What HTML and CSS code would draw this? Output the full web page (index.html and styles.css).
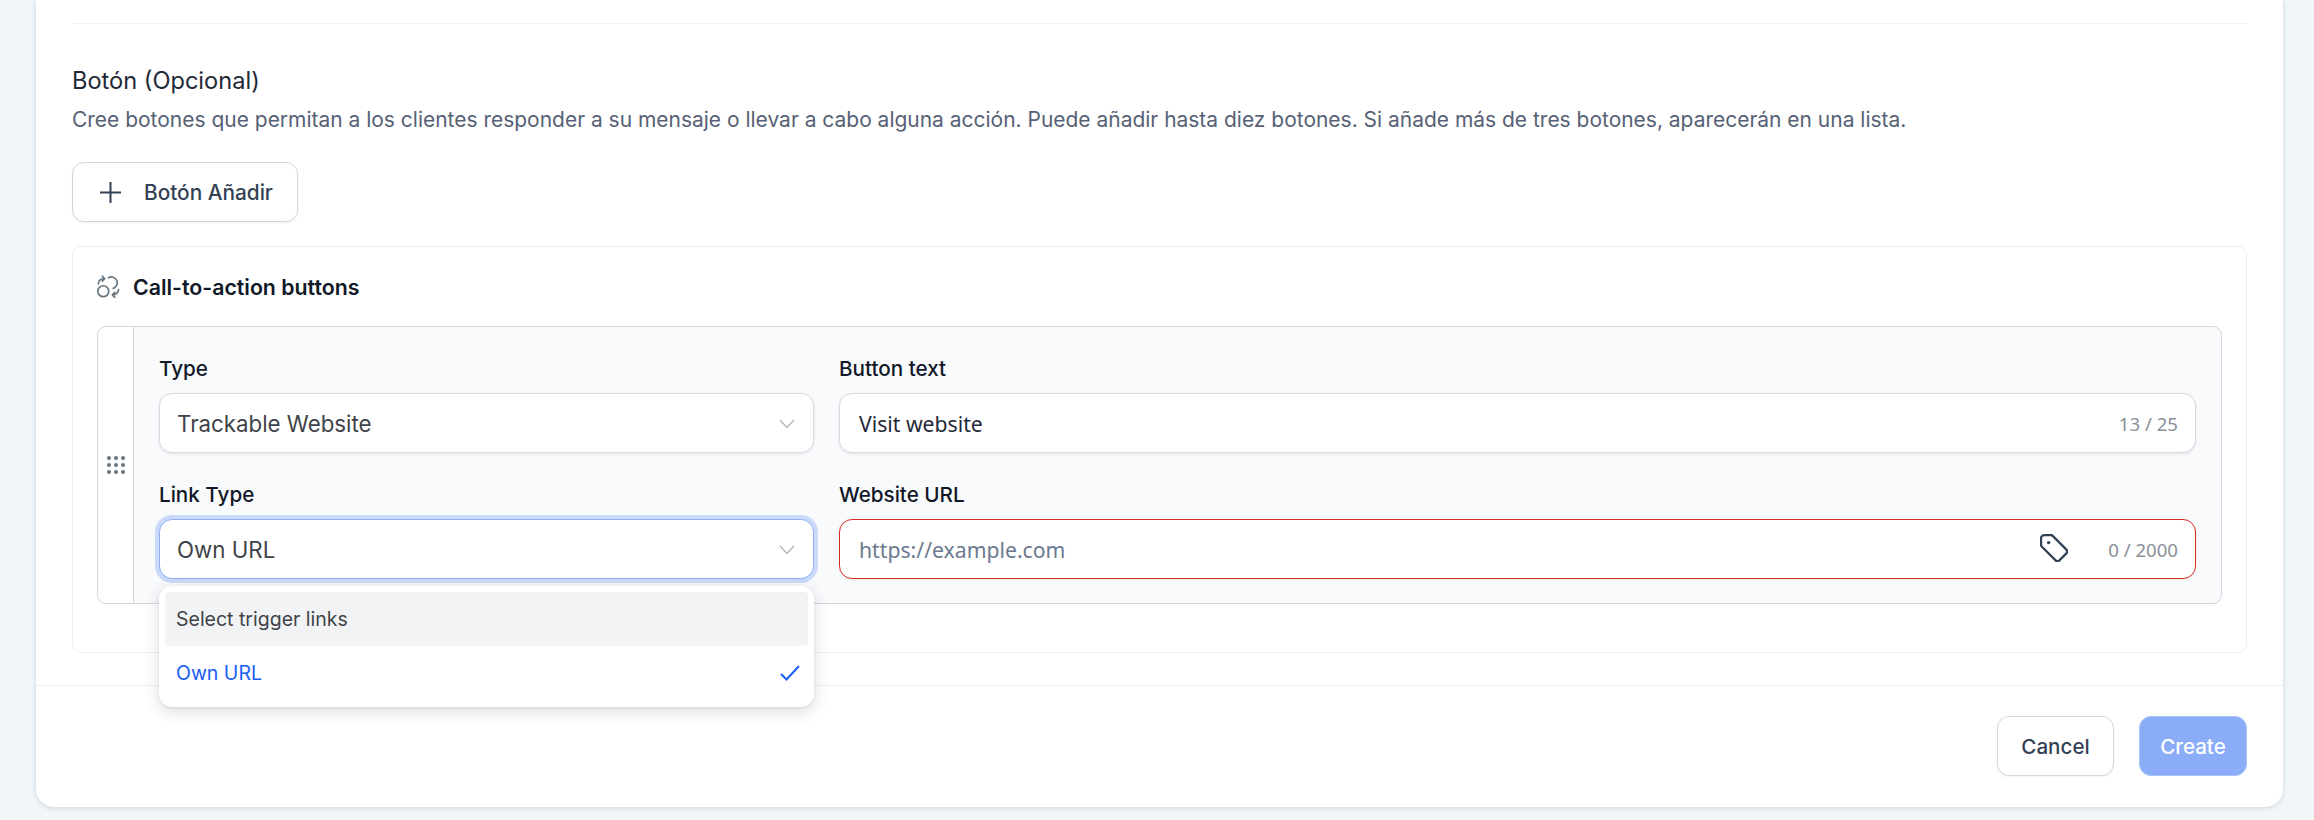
FILE: index.html
```html
<!DOCTYPE html>
<html lang="es">
<head>
<meta charset="utf-8">
<title>Botón</title>
<link rel="stylesheet" href="styles.css">
</head>
<body>
<main class="card">
  <div class="body">
    <hr class="top-rule">
    <h2 class="heading">Botón (Opcional)</h2>
    <p class="desc">Cree botones que permitan a los clientes responder a su mensaje o llevar a cabo alguna acción. Puede añadir hasta diez botones. Si añade más de tres botones, aparecerán en una lista.</p>
    <button class="btn add-btn" type="button">
      <svg class="plus" viewBox="0 0 21 21" width="21" height="21"><path d="M10.5 0v21M0 10.5h21" fill="none" stroke="#334155" stroke-width="2"/></svg>
      <span>Botón Añadir</span>
    </button>
    <section class="panel">
      <div class="panel-title">
        <svg class="cycle" viewBox="0 0 22 22" width="23" height="23" fill="none" stroke="#66757f" stroke-width="1.6" stroke-linecap="round" stroke-linejoin="round">
          <circle cx="6" cy="15.5" r="5.2"/>
          <path d="M11 2.6A5.6 5.6 0 1 1 15.5 12.8"/>
          <path d="M1.2 8.5A5.2 5.2 0 0 1 7 3.4M5 1l2.3 2.4L5 5.8"/>
          <path d="M20.6 14A5.2 5.2 0 0 1 15 19M17 16.6 14.7 19l2.3 2.4"/>
        </svg>
        <span>Call-to-action buttons</span>
      </div>
      <div class="row-box">
        <div class="grip">
          <svg viewBox="0 0 18 18" width="18" height="18" fill="#66757f">
            <circle cx="2" cy="2" r="2"/><circle cx="9" cy="2" r="2"/><circle cx="16" cy="2" r="2"/>
            <circle cx="2" cy="9" r="2"/><circle cx="9" cy="9" r="2"/><circle cx="16" cy="9" r="2"/>
            <circle cx="2" cy="16" r="2"/><circle cx="9" cy="16" r="2"/><circle cx="16" cy="16" r="2"/>
          </svg>
        </div>
        <div class="fields">
          <div class="field">
            <label class="label">Type</label>
            <div class="control">
              <span class="value">Trackable Website</span>
              <svg class="chev" viewBox="0 0 16 10" width="16" height="10"><path d="M1 1l7 7.5L15 1" fill="none" stroke="#b4b8be" stroke-width="1.4"/></svg>
            </div>
          </div>
          <div class="field">
            <label class="label">Button text</label>
            <div class="control text-control">
              <span class="value">Visit website</span>
              <span class="count">13 / 25</span>
            </div>
          </div>
          <div class="field link-field">
            <label class="label">Link Type</label>
            <div class="control focused">
              <span class="value">Own URL</span>
              <svg class="chev" viewBox="0 0 16 10" width="16" height="10"><path d="M1 1l7 7.5L15 1" fill="none" stroke="#b4b8be" stroke-width="1.4"/></svg>
            </div>
            <ul class="menu">
              <li class="option hover">Select trigger links</li>
              <li class="option selected">
                <span>Own URL</span>
                <svg viewBox="0 0 20 16" width="20" height="16"><path d="M1 9l5.5 5.5L19 1" fill="none" stroke="#1a5cf5" stroke-width="2"/></svg>
              </li>
            </ul>
          </div>
          <div class="field">
            <label class="label">Website URL</label>
            <div class="control text-control error">
              <span class="value placeholder">https://example.com</span>
              <svg class="tag" viewBox="1 1 26 26" width="28" height="28" fill="none" stroke="#334155" stroke-width="2.1"><path d="M5 2h6a2.5 2.5 0 0 1 1.8.7L25.5 15.5a2.5 2.5 0 0 1 0 3.5L19 25.5a2.5 2.5 0 0 1-3.5 0L2.8 12.8A2.5 2.5 0 0 1 2 11V5a3 3 0 0 1 3-3z"/><circle cx="9" cy="9" r="1.6" fill="#334155" stroke="none"/></svg>
              <span class="count">0 / 2000</span>
            </div>
          </div>
        </div>
      </div>
    </section>
  </div>
  <footer class="footer">
    <button class="btn cancel" type="button">Cancel</button>
    <button class="btn create" type="button">Create</button>
  </footer>
</main>
</body>
</html>
```
FILE: styles.css
```css
* { box-sizing: border-box; }
html, body { margin: 0; padding: 0; }
body {
  width: 2314px;
  height: 820px;
  overflow: hidden;
  background: #f1f6f9;
  font-family: Inter, "Liberation Sans", sans-serif;
  padding-left: 36px;
}
.card {
  width: 2247px;
  height: 807px;
  background: #fff;
  border-radius: 0 0 18px 18px;
  box-shadow: 0 1px 5px rgba(40, 60, 90, .18);
  display: flex;
  flex-direction: column;
}
.body {
  height: 649px;
  padding: 23px 36px 0;
  flex: none;
}
.top-rule {
  margin: 0;
  border: 0;
  border-top: 1px solid #f1f2f4;
}
.heading {
  margin: 44px 0 0;
  font-size: 23.6px;
  line-height: 26px;
  font-weight: 400;
  color: #1f2937;
}
.desc {
  margin: 13px 0 0;
  font-size: 20.98px;
  line-height: 26px;
  font-weight: 400;
  color: #566175;
  white-space: nowrap;
}
.btn {
  font-family: inherit;
  font-size: 20.6px;
  font-weight: 500;
  height: 60px;
  border-radius: 12px;
  background: #fff;
  color: #334155;
  border: 1.5px solid #d3d6df;
  box-shadow: 0 1px 2px rgba(16, 24, 40, .06);
  padding: 0;
}
.add-btn {
  margin-top: 29px;
  width: 226px;
  display: flex;
  align-items: center;
  padding-left: 27px;
  gap: 23px;
  font-size: 20.8px;
}
.plus { flex: none; }
.panel {
  margin-top: 24px;
  height: 407px;
  border: 1px solid #eceef1;
  border-radius: 9px;
  padding: 0 24px;
}
.panel-title {
  height: 79px;
  display: flex;
  align-items: center;
  gap: 13px;
  font-size: 21.3px;
  font-weight: 600;
  color: #111827;
}
.cycle { flex: none; }
.row-box {
  display: flex;
  height: 278px;
  border: 1px solid #d3d6df;
  border-radius: 9px;
  background: #f9fafc;
}
.grip {
  flex: none;
  width: 36px;
  background: #fff;
  border-right: 1px solid #d3d6df;
  border-radius: 9px 0 0 9px;
  display: flex;
  align-items: center;
  justify-content: center;
}
.fields {
  flex: 1;
  display: grid;
  grid-template-columns: 655px 1fr;
  column-gap: 25px;
  row-gap: 28px;
  padding: 28px 25px 0 25px;
  align-content: start;
}
.field { position: relative; }
.label {
  display: block;
  font-size: 20.65px;
  font-weight: 500;
  line-height: 28px;
  color: #111827;
  margin-bottom: 10px;
}
.control {
  height: 60px;
  background: #fff;
  border: 1.5px solid #d9dbe2;
  border-radius: 13px;
  box-shadow: 0 1px 3px rgba(16, 24, 40, .1);
  display: flex;
  align-items: center;
  padding: 0 17px;
  font-family: Inter, sans-serif;
  font-size: 22.3px;
  color: #3f4348;
}
.value { flex: 1; }
.chev { flex: none; margin-right: 1px; margin-top: 2px; }
.text-control {
  padding: 0 17px 0 19px;
  font-family: "Noto Sans", sans-serif;
  font-size: 21.2px;
}
.text-control .value { color: #1f2937; }
.text-control .placeholder { color: #6b7a90; }
.count {
  flex: none;
  font-family: "Noto Sans", sans-serif;
  font-size: 18.6px;
  color: #8a8f98;
}
.tag { flex: none; margin-right: 40px; margin-top: -2px; }
.focused {
  border-color: #8aaef8;
  box-shadow: 0 0 0 4px #cbdafa;
}
.error {
  border-color: #dc2a20;
  box-shadow: 0 1px 3px rgba(16, 24, 40, .06);
}
.menu {
  position: absolute;
  left: 0;
  right: 0;
  top: 105px;
  margin: 0;
  padding: 6px 6px 7px;
  list-style: none;
  background: #fff;
  border-radius: 13px;
  box-shadow: 0 4px 16px rgba(30, 40, 60, .16), 0 1px 3px rgba(30, 40, 60, .08);
  font-family: Inter, sans-serif;
  font-size: 19.5px;
  z-index: 2;
}
.option {
  height: 54px;
  display: flex;
  align-items: center;
  justify-content: space-between;
  padding: 0 8px 0 11px;
  color: #3f4348;
  border-radius: 4px;
}
.option.hover { background: #f2f3f5; }
.option.selected { color: #1a5cf5; }
.footer {
  flex: 1;
  margin-top: 36px;
  border-top: 1px solid #eceef1;
  display: flex;
  justify-content: flex-end;
  gap: 25px;
  padding: 30px 36px 0;
}
.cancel { width: 117px; }
.create {
  width: 108px;
  background: #8badf8;
  border-color: #a9c2fa;
  color: #fff;
  box-shadow: none;
}
```
